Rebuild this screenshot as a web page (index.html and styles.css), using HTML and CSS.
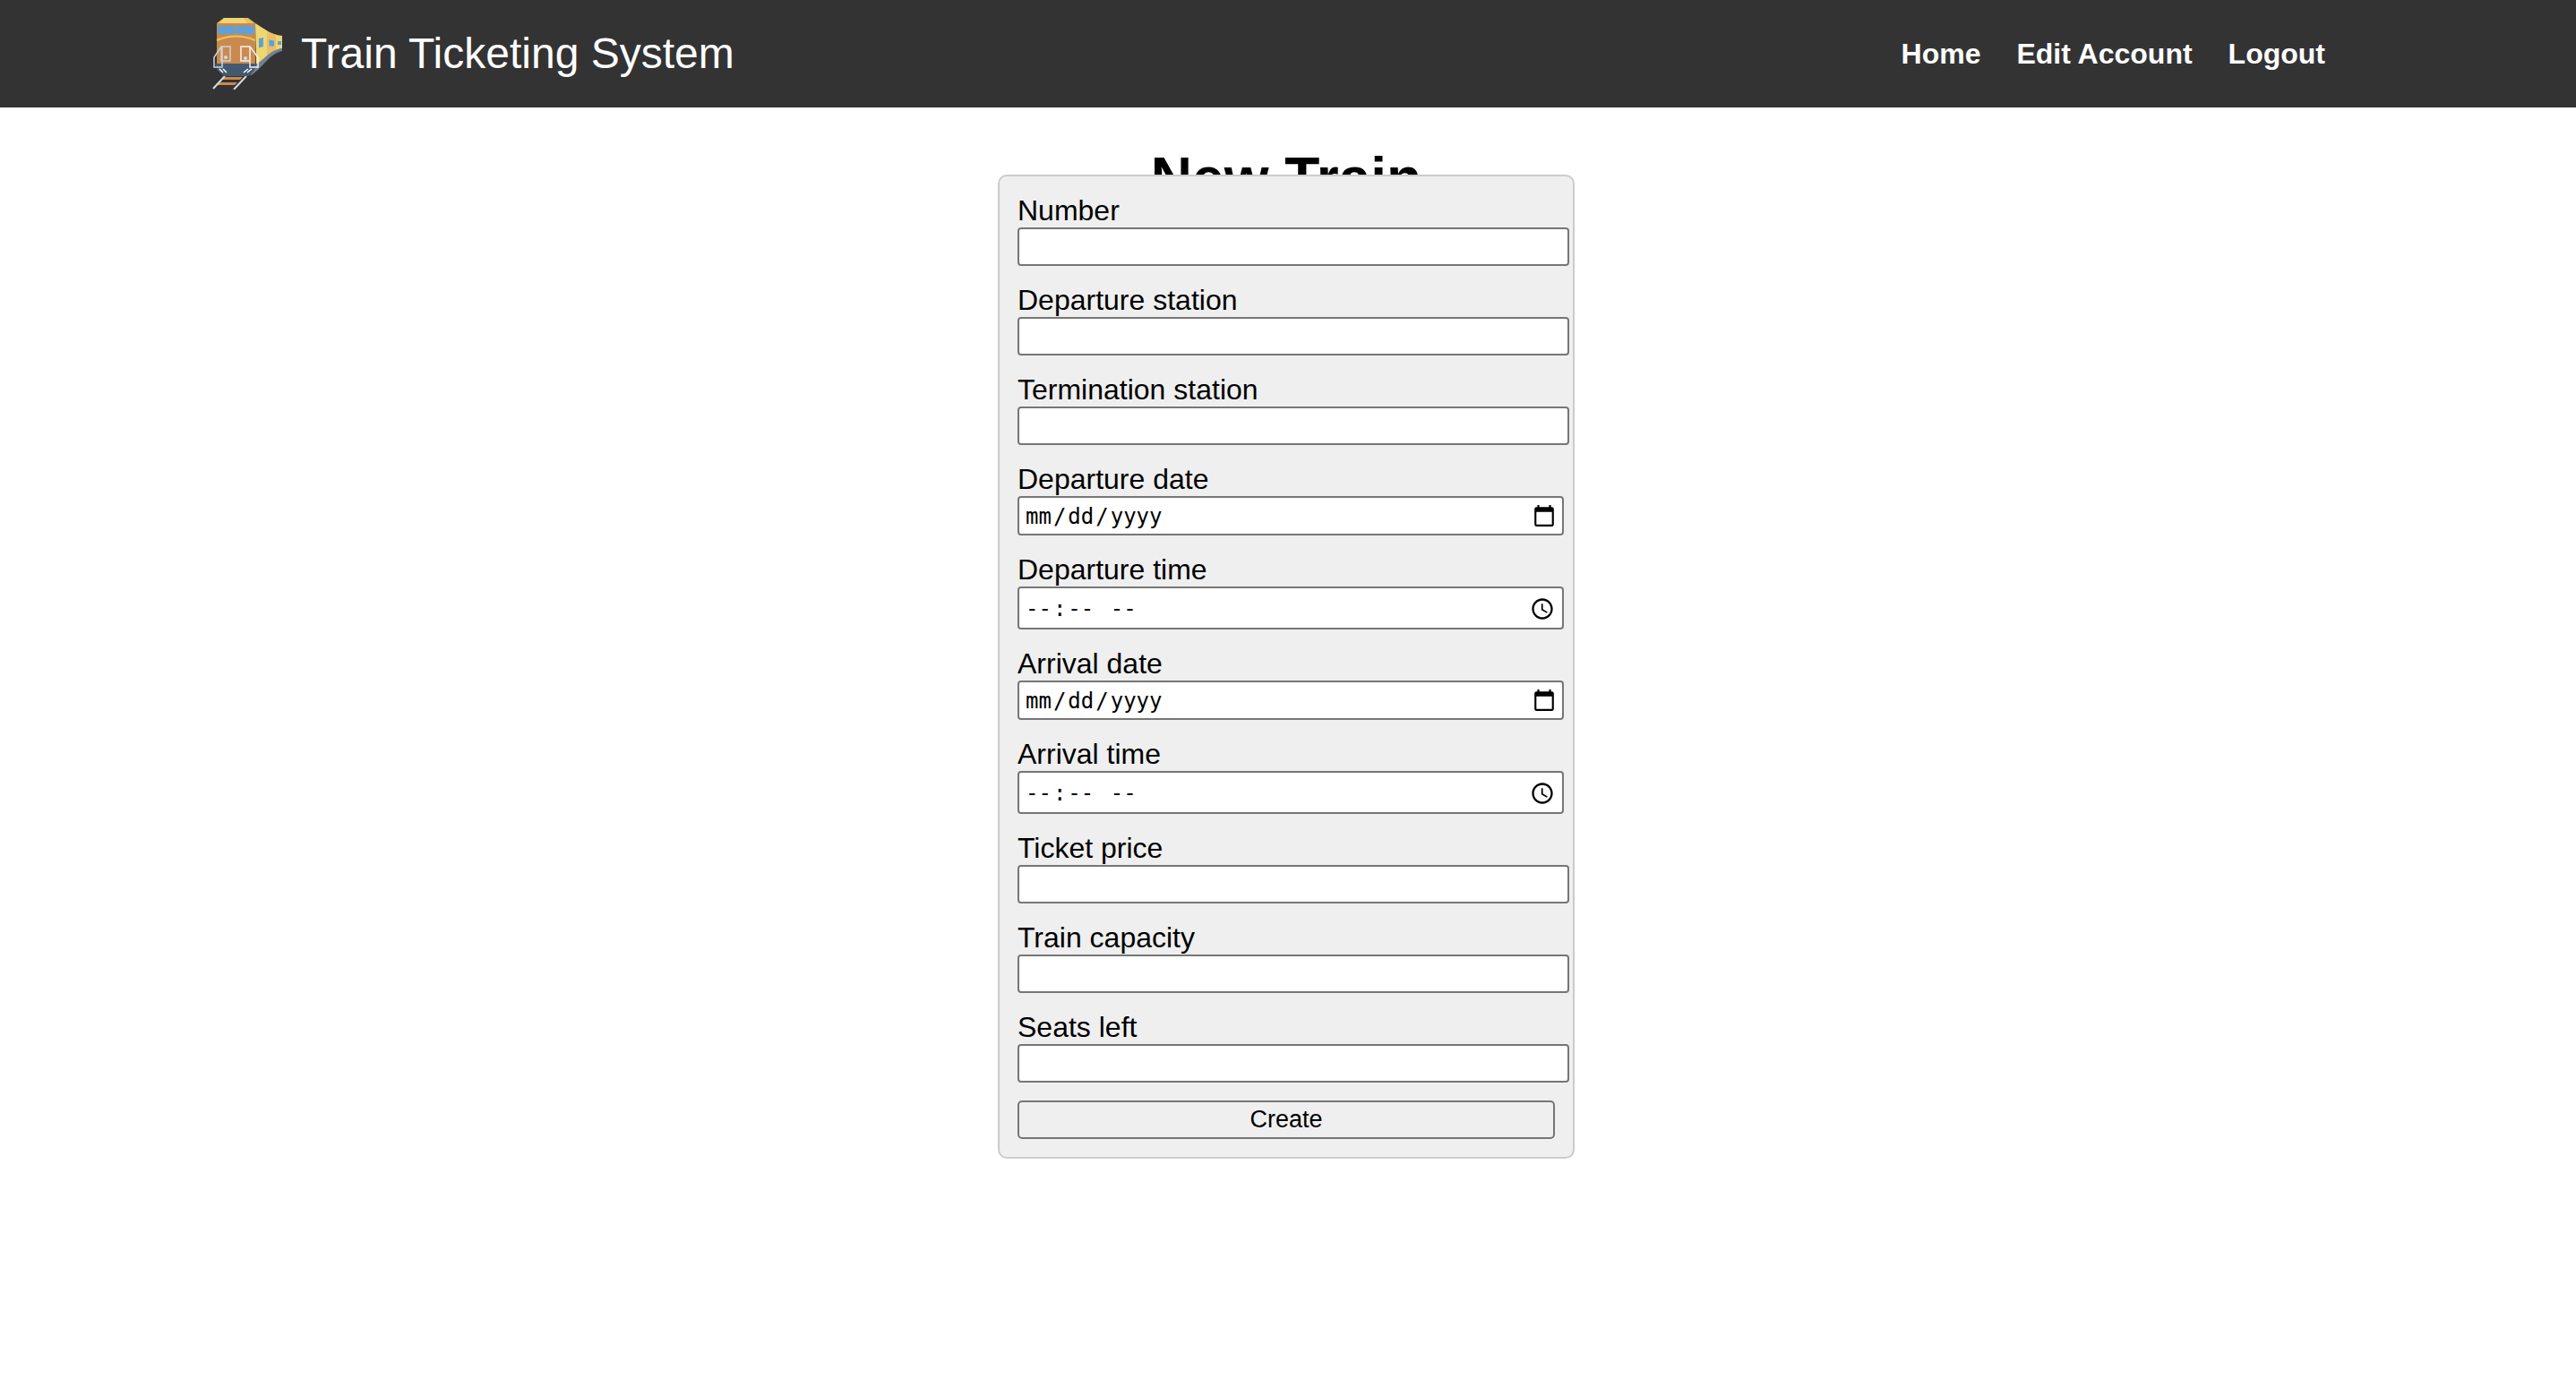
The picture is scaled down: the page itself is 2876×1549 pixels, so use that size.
FILE: index.html
```html
<!DOCTYPE html>
<html lang="en-US">
<head>
<meta charset="utf-8">
<meta name="viewport" content="width=device-width, initial-scale=1">
<title>Train Ticketing System</title>
<link rel="stylesheet" href="styles.css">
</head>
<body>
<header class="site-header">
  <div class="header-inner">
    <div class="brand">
      <svg class="logo" viewBox="0 0 80 80" aria-hidden="true">
        <path d="M15 66H35L32 69H11ZM9 72H29L26 75H5Z" fill="#ca8a4e"/>
        <path d="M15 65 2 79M39 65 25 80" stroke="#d8dce0" stroke-width="2" fill="none"/>
        <path d="M49 6C58 11 66 19 79 20V34C65 37 62 45 50 54Z" fill="#f0d673"/>
        <path d="M62 15 72 19V36L62 42Z" fill="#e9bf68"/>
        <path d="M79 34V37C64 40 58 56 43 65L50 52C62 44 65 36 79 34Z" fill="#718195"/>
        <path d="M53 23 58 22V32L53 33.500ZM64.500 24.500 70 25.500V31.500H64.500ZM74 26H78V30H74Z" fill="#5fa1d7"/>
        <path d="M6 6 14 0H41L49 6Z" fill="#e9bf68"/>
        <path d="M14 0H36L40 6H10Z" fill="#f0d673"/>
        <path d="M6 6H49V52H6Z" fill="#ca8a4e"/>
        <path d="M7 9H27V18H7ZM28 9H48V18H28Z" fill="#5fa1d7"/>
        <path d="M6 25Q27 16 49 25" fill="none" stroke="#edc45e" stroke-width="2"/>
        <path d="M4 51H51L47 60 41 65H14L7 59Z" fill="#455a70"/>
        <g fill="none" stroke="#d0d2d5" stroke-width="1.500">
          <path d="M11 32H21V48H11ZM11 32 3 44V55H12V33"/>
          <path d="M33 32H43V48H33ZM43 32 52 44V55H43V33" stroke="#f3f3f3"/>
          <path d="M9 57 13 61M13 57 17 61M41 57 36 61M45 57 40 61" stroke="#fff"/>
        </g>
        <circle cx="16" cy="44" r="2" fill="#d8dce0"/>
        <circle cx="38" cy="45" r="2" fill="#d8dce0"/>
      </svg>
      <span class="brand-name">Train Ticketing System</span>
    </div>
    <nav class="site-nav">
      <a href="#">Home</a>
      <a href="#">Edit Account</a>
      <a href="#">Logout</a>
    </nav>
  </div>
</header>
<main class="page">
  <h1 class="page-title">New Train</h1>
  <form class="train-form">
    <div class="field"><label for="number">Number</label><input class="text-input" type="text" id="number"></div>
    <div class="field"><label for="dep-station">Departure station</label><input class="text-input" type="text" id="dep-station"></div>
    <div class="field"><label for="term-station">Termination station</label><input class="text-input" type="text" id="term-station"></div>
    <div class="field"><label for="dep-date">Departure date</label><input class="date-input" type="date" id="dep-date"></div>
    <div class="field"><label for="dep-time">Departure time</label><input class="time-input" type="time" id="dep-time"></div>
    <div class="field"><label for="arr-date">Arrival date</label><input class="date-input" type="date" id="arr-date"></div>
    <div class="field"><label for="arr-time">Arrival time</label><input class="time-input" type="time" id="arr-time"></div>
    <div class="field"><label for="price">Ticket price</label><input class="text-input" type="text" id="price"></div>
    <div class="field"><label for="capacity">Train capacity</label><input class="text-input" type="text" id="capacity"></div>
    <div class="field"><label for="seats">Seats left</label><input class="text-input" type="text" id="seats"></div>
    <button class="submit" type="submit">Create</button>
  </form>
</main>
</body>
</html>
```
FILE: styles.css
```css
body {
  margin: 0;
  background: #fff;
  color: #000;
  font-family: "Liberation Sans", Arial, sans-serif;
  font-size: 32px;
  line-height: 37px;
}

.site-header {
  background: #333;
  color: #fff;
  padding: 20px 4px 20px 0;
}

.header-inner {
  max-width: 2400px;
  margin: 0 auto;
  display: flex;
  align-items: center;
  justify-content: space-between;
}

.brand {
  display: flex;
  align-items: center;
  gap: 20px;
}

.logo {
  width: 80px;
  height: 80px;
}

.brand-name {
  font-size: 48px;
  line-height: 56px;
}

.site-nav {
  display: flex;
  gap: 40px;
  padding-right: 40px;
}

.site-nav a {
  color: #fff;
  font-weight: bold;
  text-decoration: none;
}

.page {
  display: flex;
  flex-direction: column;
  align-items: center;
  padding: 43px 4px 43px 0;
}

.page-title {
  margin: 0;
  font-size: 64px;
  line-height: 72px;
}

/* The card overlaps the lower part of the heading */
.train-form {
  position: relative;
  width: 600px;
  margin-top: -40px;
  padding: 20px;
  border: 2px solid #ccc;
  border-radius: 10px;
  background: #efefef;
}

.field {
  margin-bottom: 20px;
}

.field label {
  display: block;
}

.field input {
  display: block;
  box-sizing: border-box;
  margin: 0;
  border: 2px solid #767676;
  border-radius: 4px;
  background: #fff;
  color: #000;
}

.field .text-input {
  width: calc(100% + 16px);
  height: 43px;
  padding: 2px 6px;
  font: 27px "Liberation Sans", Arial, sans-serif;
}

.field .date-input,
.field .time-input {
  width: calc(100% + 10px);
  height: 44px;
  padding: 2px 6px 0;
  font: 24px "DejaVu Sans Mono", monospace;
}

.field .time-input {
  height: 48px;
}

.date-input::-webkit-datetime-edit-text,
.time-input::-webkit-datetime-edit-text {
  padding: 0 1px;
}

.date-input::-webkit-calendar-picker-indicator {
  width: 28px;
  height: 28px;
  padding: 0;
}

.time-input::-webkit-calendar-picker-indicator {
  width: 28px;
  height: 28px;
  padding: 0 2px;
}

.submit {
  display: block;
  width: 100%;
  height: 43px;
  margin: 0;
  padding: 0 12px;
  border: 2px solid #767676;
  border-radius: 5px;
  background: #efefef;
  color: #000;
  font: 27px "Liberation Sans", Arial, sans-serif;
}
```
